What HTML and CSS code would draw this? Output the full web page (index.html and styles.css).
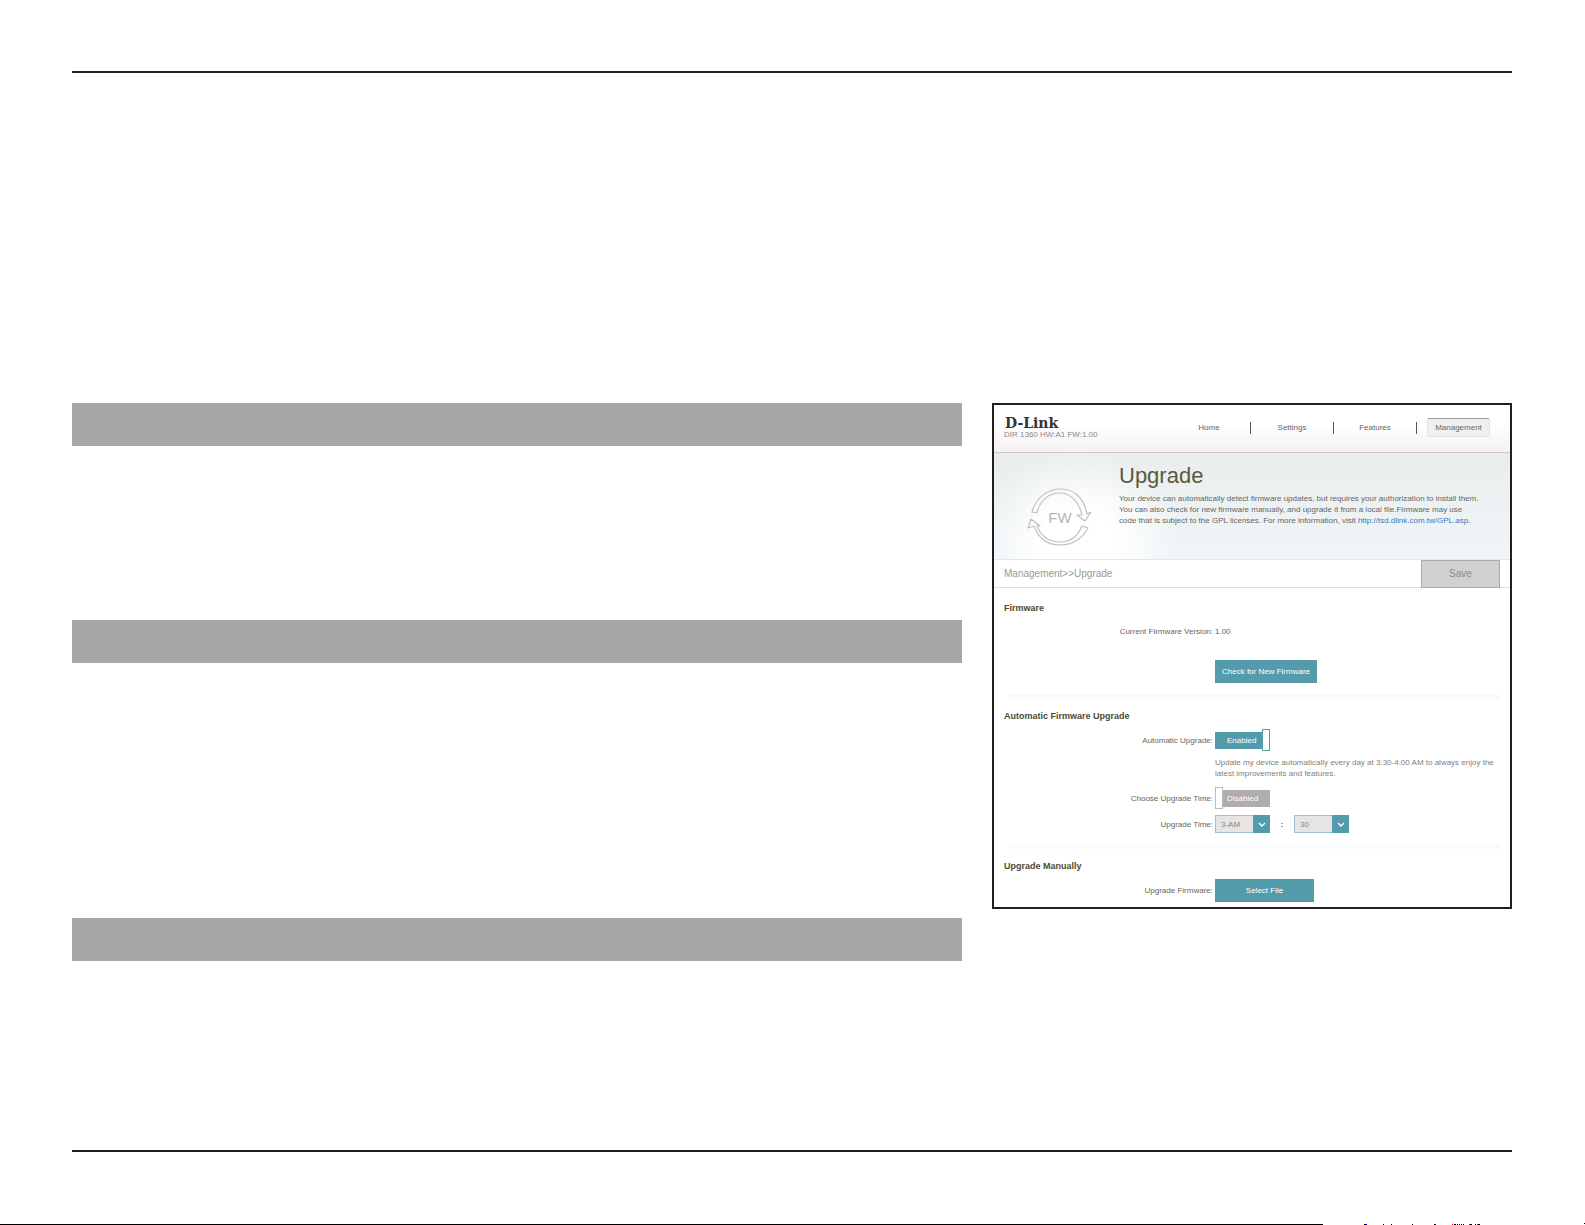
FILE: index.html
```html
<!DOCTYPE html>
<html lang="en">
<head>
    <meta charset="UTF-8">
    <meta name="viewport" content="width=device-width, initial-scale=1.0">
    <title>Upgrade</title>
    <link rel="stylesheet" href="styles.css">
</head>
<body>
    <main class="sheet">
        <div class="topics">
            <section class="topic"><div class="bar"></div></section>
            <section class="topic topic-tall"><div class="bar"></div></section>
            <section class="topic"><div class="bar"></div></section>
        </div>

        <div class="panel">
            <header class="header">
                <div>
                    <div class="logo">D-Link</div>
                    <div class="model">DIR 1360 HW:A1 FW:1.00</div>
                </div>
                <nav>
                    <ul class="menu">
                        <li><a href="#">Home</a></li>
                        <li><a href="#">Settings</a></li>
                        <li><a href="#">Features</a></li>
                        <li><a href="#" class="active">Management</a></li>
                    </ul>
                </nav>
            </header>

            <div class="hero">
                <svg class="hero-icon" width="66" height="60" viewBox="0 0 66 60" fill="none" stroke="#c2c0bf" stroke-width="1.2" stroke-linejoin="round">
                    <path d="M5 25 C9 10 21 2 34 2 C47 2 57 11 60 27 L64 25 L58 34 L50 28 L55 28 C52 14 43 6 33 6 C22 6 13 13 10 26 Z"/>
                    <path d="M61 41 C56 51 46 58 33 58 C19 58 11 50 7 39 L1 41 L4 32 L13 39 L10 39 C14 49 22 55 33 55 C43 55 51 49 55 39 Z"/>
                    <text x="33" y="36" text-anchor="middle" class="fw">FW</text>
                </svg>
                <div class="hero-text">
                    <h1>Upgrade</h1>
                    <p>Your device can automatically detect firmware updates, but requires your authorization to install them.<br>
                    You can also check for new firmware manually, and upgrade it from a local file.Firmware may use<br>
                    code that is subject to the GPL licenses. For more information, visit <a href="#">http://tsd.dlink.com.tw/GPL.asp</a>.</p>
                </div>
            </div>

            <div class="crumbs">
                <span>Management&gt;&gt;Upgrade</span>
                <button class="save" type="button">Save</button>
            </div>

            <section class="group">
                <h2>Firmware</h2>
                <div class="row version">
                    <span class="name">Current Firmware Version:</span>
                    <span>1.00</span>
                </div>
                <div class="row check">
                    <button class="btn" type="button">Check for New Firmware</button>
                </div>
            </section>

            <section class="group">
                <h2>Automatic Firmware Upgrade</h2>
                <div class="row">
                    <label class="name" for="auto">Automatic Upgrade:</label>
                    <span class="toggle">
                        <input type="checkbox" id="auto" checked>
                        <span class="track">Enabled</span>
                    </span>
                </div>
                <div class="row note">
                    <p>Update my device automatically every day at 3:30-4:00 AM to always enjoy the<br>latest improvements and features.</p>
                </div>
                <div class="row">
                    <label class="name" for="choose">Choose Upgrade Time:</label>
                    <span class="toggle">
                        <input type="checkbox" id="choose">
                        <span class="track">Disabled</span>
                    </span>
                </div>
                <div class="row">
                    <label class="name" for="hour">Upgrade Time:</label>
                    <div class="time">
                        <span class="drop">
                            <select id="hour"><option>3-AM</option></select>
                            <svg class="arrow" viewBox="0 0 17 18"><path d="M6 8 L9 11 L12 8"/></svg>
                        </span>
                        <b>:</b>
                        <span class="drop">
                            <select id="minute" aria-label="Minute"><option>30</option></select>
                            <svg class="arrow" viewBox="0 0 17 18"><path d="M6 8 L9 11 L12 8"/></svg>
                        </span>
                    </div>
                </div>
            </section>

            <section class="group">
                <h2>Upgrade Manually</h2>
                <div class="row">
                    <label class="name" for="file">Upgrade Firmware:</label>
                    <button class="btn" type="button" id="file">Select File</button>
                </div>
            </section>
        </div>
    </main>
    <footer class="page-end">
        <svg width="262" height="2" viewBox="0 0 262 2" shape-rendering="crispEdges">
            <path stroke="#000" d="M41 1.5h2M60 1.5h1M68 1.5h1M89 1.5h1M111 1.5h1M131 1.5h2M134 1.5h1M138 1.5h1M140 1.5h1M147 1.5h2M152 1.5h1M155 1.5h2M261 .5h1"/>
            <path stroke="#00f" d="M43 1.5h1M112 1.5h1M136 1.5h1"/>
            <path stroke="#f00" d="M129 1.5h1M146 1.5h1M154 1.5h1"/>
        </svg>
    </footer>
</body>
</html>
```
FILE: styles.css
```css
* {
    box-sizing: border-box;
}
body {
    display: flex;
    flex-direction: column;
    min-height: 100vh;
    margin: 0;
    padding-top: 71px;
    background-color: #fff;
    font-family: "Liberation Sans", Arial, sans-serif;
    font-size: 8px;
    line-height: 11px;
    color: #666;
}
h1, h2, p, ul {
    margin: 0;
    padding: 0;
}
a {
    color: inherit;
    text-decoration: none;
}
button, select, input {
    font: inherit;
    margin: 0;
}

/* page */
.sheet {
    flex: 1;
    display: grid;
    grid-template-columns: 1fr 520px;
    gap: 30px;
    align-items: start;
    margin: 0 73px 0 72px;
    padding-top: 330px;
    border-top: 2px solid #231f20;
    border-bottom: 2px solid #231f20;
}
.topic {
    padding-bottom: 174px;
}
.topic-tall {
    padding-bottom: 255px;
}
.topic:last-child {
    padding-bottom: 0;
}
.bar {
    height: 43px;
    background-color: #a7a7a5;
}
.page-end {
    display: flex;
    justify-content: flex-end;
    align-items: flex-end;
    height: 73px;
}
.page-end::before {
    content: "";
    flex: 1;
    height: 1px;
    background-color: #000;
}

/* router screen */
.panel {
    padding-bottom: 5px;
    border: 2px solid #231f20;
}
.header {
    display: flex;
    justify-content: space-between;
    align-items: center;
    height: 48px;
    padding: 0 10px 2px;
    border-bottom: 1px solid #cfcac6;
    background: linear-gradient(#fff 40%, #f3f1f1);
}
.logo {
    padding: 2px 0 0 1px;
    font-family: "DejaVu Serif", serif;
    font-size: 14px;
    line-height: 12px;
    font-weight: bold;
    color: #333;
}
.model {
    color: #888;
}
.menu {
    display: flex;
    list-style: none;
}
.menu li {
    display: flex;
    justify-content: center;
    align-items: center;
    width: 83px;
    height: 12px;
    border-right: 1px solid #555;
}
.menu li:last-child {
    border-right: 0;
}
.menu .active {
    padding: 3px 7px;
    border: 1px solid #e4e2e2;
    border-top-color: #999;
    border-radius: 2px;
    background-color: #f1f0f0;
}
.hero {
    display: flex;
    gap: 26px;
    height: 107px;
    padding: 10px 10px 0 33px;
    border-bottom: 1px solid #dfe8ec;
    background:
        radial-gradient(ellipse 100px 95px at 85px 90px, #fff 35%, transparent),
        linear-gradient(#e9eded, #f0f5f8);
}
.hero-icon {
    flex: none;
    margin-top: 24px;
}
.fw {
    font-size: 15px;
    fill: #b5b5b5;
    stroke: none;
}
.hero-text {
    white-space: nowrap;
}
.hero h1 {
    margin-bottom: 4px;
    font-size: 22px;
    line-height: 26px;
    font-weight: normal;
    color: #5a5a3c;
}
.hero p a {
    color: #3c78c8;
}
.crumbs {
    display: flex;
    justify-content: space-between;
    align-items: center;
    height: 28px;
    padding: 0 10px;
    border-bottom: 1px solid #ddd;
    font-size: 10px;
    line-height: 12px;
    color: #999;
}
.save {
    width: 79px;
    height: 28px;
    padding: 0;
    border: 1px solid #aaa;
    background-color: #d0d0d0;
    color: #8c8c8c;
}

/* settings groups */
.group {
    padding: 14px 10px 0;
}
.group + .group {
    padding-top: 11px;
}
.group + .group::before {
    content: "";
    display: block;
    height: 5px;
    margin: 0 0 11px 4px;
    background-color: #fafafa;
}
.group h2 {
    margin-bottom: 7px;
    font-size: 9px;
    line-height: 12px;
    color: #4c4a35;
}
.row {
    display: grid;
    grid-template-columns: 209px 1fr;
    column-gap: 2px;
    align-items: center;
    justify-items: start;
    margin-bottom: 6px;
}
.row:last-child {
    margin-bottom: 0;
}
.name {
    justify-self: end;
}
.version {
    padding: 5px 0 17px;
}
.check .btn, .note p {
    grid-column: 2;
}
.note {
    margin-bottom: 8px;
    color: #808080;
}
.btn {
    min-width: 99px;
    height: 23px;
    padding: 0 7px;
    border: 0;
    background-color: #549bab;
    color: #fff;
}
.toggle {
    position: relative;
    display: flex;
    align-items: center;
    width: 55px;
    height: 22px;
}
.toggle input {
    position: absolute;
    left: 0;
    width: 8px;
    height: 22px;
    appearance: none;
    border: 1px solid #bbb;
    background-color: #fff;
}
.toggle input:checked {
    left: auto;
    right: 0;
    border-color: #549bab;
}
.track {
    width: 100%;
    padding: 3px 0 3px 12px;
    background-color: #b0adac;
    color: #fff;
}
.toggle input:checked + .track {
    background-color: #549bab;
}
.time {
    display: flex;
    align-items: center;
}
.time b {
    width: 24px;
    text-align: center;
}
.drop {
    position: relative;
    display: flex;
}
.drop select {
    width: 55px;
    height: 18px;
    padding: 0 5px;
    appearance: none;
    border: 1px solid #9cc2cb;
    border-radius: 0;
    background-color: #e6e5e4;
    color: #858585;
}
.arrow {
    position: absolute;
    top: 0;
    right: 0;
    width: 17px;
    height: 18px;
    background-color: #549bab;
    fill: none;
    stroke: #fff;
    stroke-width: 1.4;
    pointer-events: none;
}
```
